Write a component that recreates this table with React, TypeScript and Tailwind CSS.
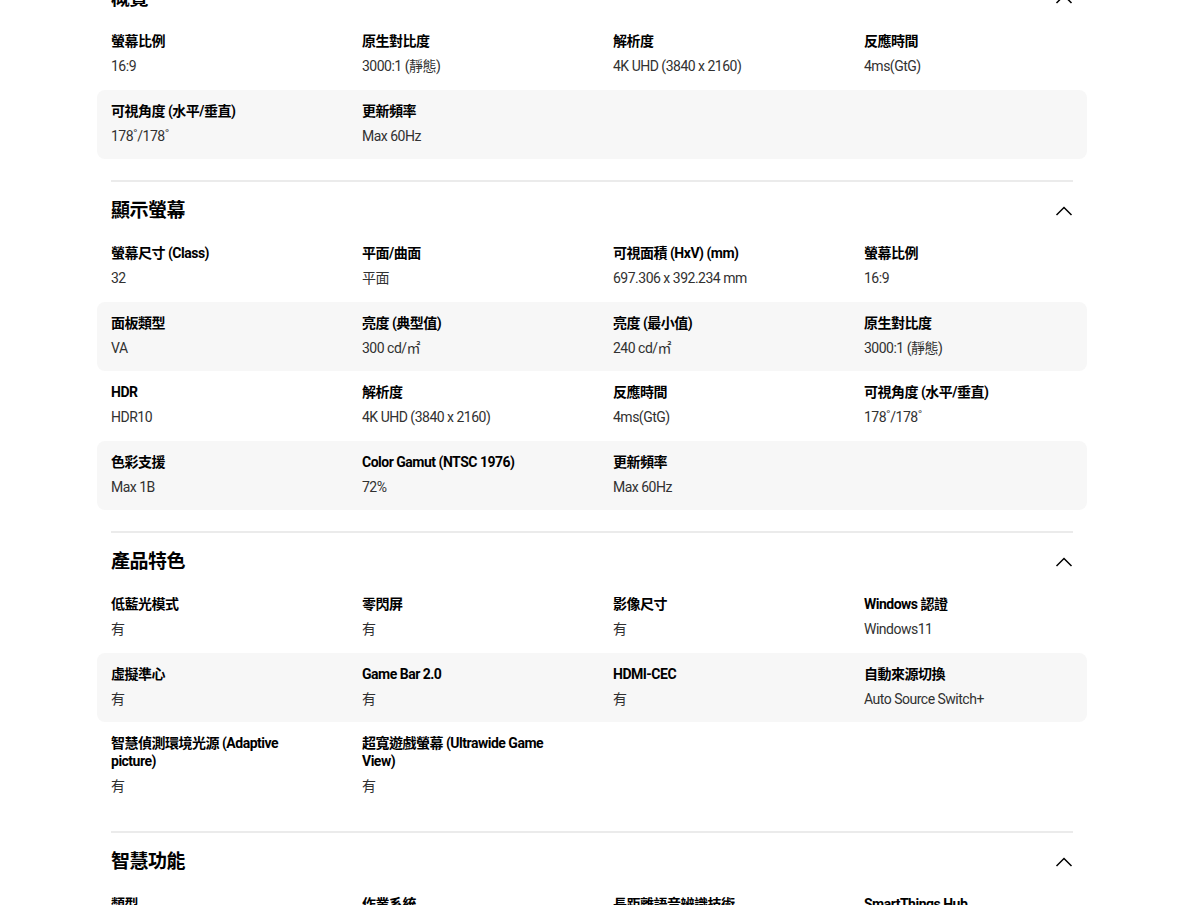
import React from "react";

type Item = { label: string; value: string };
type Section = { title: string; items: Item[] };

const sections: Section[] = [
  {
    title: "概覽",
    items: [
      { label: "螢幕比例", value: "16:9" },
      { label: "原生對比度", value: "3000:1 (靜態)" },
      { label: "解析度", value: "4K UHD (3840 x 2160)" },
      { label: "反應時間", value: "4ms(GtG)" },
      { label: "可視角度 (水平/垂直)", value: "178˚/178˚" },
      { label: "更新頻率", value: "Max 60Hz" },
    ],
  },
  {
    title: "顯示螢幕",
    items: [
      { label: "螢幕尺寸 (Class)", value: "32" },
      { label: "平面/曲面", value: "平面" },
      { label: "可視面積 (HxV) (mm)", value: "697.306 x 392.234 mm" },
      { label: "螢幕比例", value: "16:9" },
      { label: "面板類型", value: "VA" },
      { label: "亮度 (典型值)", value: "300 cd/㎡" },
      { label: "亮度 (最小值)", value: "240 cd/㎡" },
      { label: "原生對比度", value: "3000:1 (靜態)" },
      { label: "HDR", value: "HDR10" },
      { label: "解析度", value: "4K UHD (3840 x 2160)" },
      { label: "反應時間", value: "4ms(GtG)" },
      { label: "可視角度 (水平/垂直)", value: "178˚/178˚" },
      { label: "色彩支援", value: "Max 1B" },
      { label: "Color Gamut (NTSC 1976)", value: "72%" },
      { label: "更新頻率", value: "Max 60Hz" },
    ],
  },
  {
    title: "產品特色",
    items: [
      { label: "低藍光模式", value: "有" },
      { label: "零閃屏", value: "有" },
      { label: "影像尺寸", value: "有" },
      { label: "Windows 認證", value: "Windows11" },
      { label: "虛擬準心", value: "有" },
      { label: "Game Bar 2.0", value: "有" },
      { label: "HDMI-CEC", value: "有" },
      { label: "自動來源切換", value: "Auto Source Switch+" },
      { label: "智慧偵測環境光源 (Adaptive picture)", value: "有" },
      { label: "超寬遊戲螢幕 (Ultrawide Game View)", value: "有" },
    ],
  },
  {
    title: "智慧功能",
    items: [
      { label: "類型", value: "" },
      { label: "作業系統", value: "" },
      { label: "長距離語音辨識技術", value: "" },
      { label: "SmartThings Hub", value: "" },
    ],
  },
];

function Chevron() {
  return (
    <svg width="18" height="10" viewBox="0 0 18 10" fill="none">
      <polyline points="1.5,9 9,1.5 16.5,9" stroke="#000" strokeWidth="1.5" fill="none" />
    </svg>
  );
}

function chunk<T>(arr: T[], n: number): T[][] {
  const out: T[][] = [];
  for (let i = 0; i < arr.length; i += n) out.push(arr.slice(i, i + n));
  return out;
}

export default function App() {
  return (
    <div
      className="min-h-[905px] overflow-hidden bg-white text-black tracking-[-0.5px]"
      style={{ fontFamily: '"Roboto", "Noto Sans CJK TC", sans-serif' }}
    >
      <div className="ml-[97px] w-[990px] mt-[-30px]">
        {sections.map((s, si) => (
          <div key={s.title} className={si < sections.length - 1 ? "mb-[21px]" : ""}>
            {si > 0 && <div className="mx-[14px] h-[2px] bg-[#ebebeb]" />}
            <div className="flex items-center justify-between px-[14px] pt-[15px] pb-[7px]">
              <h2 className="text-[19px] leading-[28px] font-bold">{s.title}</h2>
              <Chevron />
            </div>
            <div className="flex flex-col">
              {chunk(s.items, 4).map((row, ri) => (
                <div
                  key={ri}
                  className={
                    "grid grid-cols-4 gap-x-[42px] px-[14px] pt-[12px] pb-[14.5px] rounded-[8px] " +
                    (ri % 2 === 1 ? "bg-[#f7f7f7]" : "bg-white")
                  }
                >
                  {row.map((it) => (
                    <div key={it.label} className="flex flex-col">
                      <div className="text-[14px] leading-[18px] font-bold text-black">{it.label}</div>
                      <div className="mt-[7px] text-[14px] leading-[18px] text-[#313131]">{it.value}</div>
                    </div>
                  ))}
                </div>
              ))}
            </div>
          </div>
        ))}
      </div>
    </div>
  );
}
